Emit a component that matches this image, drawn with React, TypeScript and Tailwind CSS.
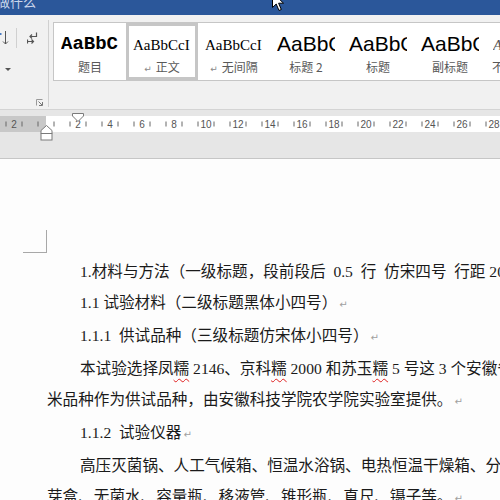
import React from 'react';

interface StyleItem {
  sample: string;
  sampleClass: string;
  label: string;
  mark?: boolean;
  selected?: boolean;
}

const styles: StyleItem[] = [
  { sample: 'AaBbC', sampleClass: "font-['Liberation_Mono'] font-bold text-[19px] text-black", label: '题目' },
  { sample: 'AaBbCcI', sampleClass: "font-['Liberation_Serif'] text-[15px] text-black", label: '正文', mark: true, selected: true },
  { sample: 'AaBbCcI', sampleClass: "font-['Liberation_Serif'] text-[15px] text-black", label: '无间隔', mark: true },
  { sample: 'AaBbCcDd', sampleClass: "font-['Liberation_Sans'] text-[21px] text-black", label: '标题 2' },
  { sample: 'AaBbCcDd', sampleClass: "font-['Liberation_Sans'] text-[21px] text-black", label: '标题' },
  { sample: 'AaBbCcDd', sampleClass: "font-['Liberation_Sans'] text-[21px] text-black", label: '副标题' },
  { sample: 'AaBbCcDd', sampleClass: "font-['Liberation_Serif'] italic text-[15px] text-[#555]", label: '不明显强调' },
];

const rulerNums = [-2, 0, 2, 4, 6, 8, 10, 12, 14, 16, 18, 20, 22, 24, 26, 28];

function Mark() {
  return <span className="font-['DejaVu_Sans'] text-[10px] text-[#a0a0a0] ml-[2px]">↵</span>;
}

function Nuo() {
  return <span className="underline decoration-wavy decoration-[#e02020] decoration-1 underline-offset-[4px]">糯</span>;
}

function Ruler() {
  return (
    <div className="relative h-[49px] bg-[#e6e6e6] border-b border-[#c6c6c6] pt-[6px]">
      <div className="flex h-[16px]">
        <div className="w-[46px] bg-[#c8c8c8]" />
        <div className="flex-1 bg-white" />
      </div>
      <svg className="absolute left-0 top-0" width="500" height="48" viewBox="0 0 500 48">
        {rulerNums.map((n) => {
          const x = 46 + n * 16;
          return (
            <g key={n}>
              <line x1={x - 8} y1={11.5} x2={x - 8} y2={16.5} stroke="#666" strokeWidth="1" />
              <line x1={x + 8} y1={11.5} x2={x + 8} y2={16.5} stroke="#666" strokeWidth="1" />
              {n !== 0 && (
                <text x={x} y={18} textAnchor="middle" fontSize="10" fontFamily="Liberation Sans" fill="#555">
                  {Math.abs(n)}
                </text>
              )}
            </g>
          );
        })}
        <path d="M72.5 3.5 H83.5 V6 L78 11.5 L72.5 6 Z" fill="#fff" stroke="#7a7a7a" strokeWidth="1" />
        <path d="M46.5 15.5 L52 20.5 V23.5 H41 V20.5 Z" fill="#fff" stroke="#7a7a7a" strokeWidth="1" />
        <rect x="41" y="23.5" width="11" height="6.5" fill="#fff" stroke="#7a7a7a" strokeWidth="1" />
      </svg>
    </div>
  );
}

export default function App() {
  return (
    <div className="relative w-[500px] h-[500px] overflow-hidden bg-[#fdfdfd]">
      {/* title bar */}
      <div className="h-[15px] bg-[#2b579a] overflow-hidden">
        <div className="-mt-[8px] -ml-[3px] text-[13px] leading-[20px] text-[#c9d5ea] font-['Noto_Sans_CJK_SC',sans-serif]">
          做什么
        </div>
      </div>

      {/* ribbon */}
      <div className="h-[95px] bg-[#f1f1f1] border-b border-[#d4d4d4] flex overflow-hidden">
        <div className="w-[48px] shrink-0 flex flex-col pt-[13px] pb-[3px]">
          <div className="flex items-center h-[20px]">
            <svg width="10" height="16" viewBox="0 0 10 16">
              <rect x="0" y="3" width="1.5" height="2" fill="#4a7cc4" />
              <path d="M5.5 1 V14 M3 11.5 L5.5 14 L8 11.5" stroke="#555" strokeWidth="1" fill="none" />
            </svg>
            <div className="ml-[6px] w-px h-[20px] bg-[#d0d0d0]" />
            <svg className="ml-[10px]" width="11" height="13" viewBox="0 0 11 13">
              <path d="M9.5 0.5 V4.5 H3 M5 2.5 L3 4.5 L5 6.5" stroke="#555" strokeWidth="1.2" fill="none" />
              <path d="M0.5 9.5 H6 M4.5 7.5 L6.5 9.5 L4.5 11.5 M0.5 7.5 V11.5" stroke="#555" strokeWidth="1.2" fill="none" />
            </svg>
          </div>
          <svg className="ml-[5px] mt-[20px]" width="6" height="4" viewBox="0 0 6 4">
            <path d="M0 0 H6 L3 3 Z" fill="#555" />
          </svg>
          <svg className="mt-auto ml-[36px]" width="7" height="7" viewBox="0 0 7 7">
            <path d="M0.5 6.5 V0.5 H6.5" stroke="#999" strokeWidth="1" fill="none" />
            <path d="M2.5 2.5 L6 6 M6.5 3 V6.5 H3" stroke="#777" strokeWidth="1" fill="none" />
          </svg>
        </div>
        <div className="w-px shrink-0 h-[87px] mt-[5px] bg-[#d0d0d0]" />
        <div className="ml-[4px] mt-[7px] w-[560px] shrink-0 h-[59px] border border-[#c6c6c6] bg-white flex">
          {styles.map((s, i) => (
            <div
              key={i}
              className={`w-[72px] h-[57px] shrink-0 border-[3px] ${s.selected ? 'border-[#c6c6c6]' : 'border-transparent'}`}
            >
              <div className="h-[33px] pt-[3px] flex items-center">
                <div className="mx-[4px] w-[58px] overflow-hidden whitespace-nowrap">
                  <span className={s.sampleClass}>{s.sample}</span>
                </div>
              </div>
              <div className="h-[16px] leading-[16px] text-center whitespace-nowrap text-[12px] text-[#595959] font-['Noto_Sans_CJK_SC',sans-serif]">
                {s.mark && <span className="font-['DejaVu_Sans'] text-[9px] text-[#888] mr-[4px]">↵</span>}
                {s.label}
              </div>
            </div>
          ))}
        </div>
      </div>

      <Ruler />

      {/* document */}
      <div className="pt-[71px]">
        <div className="ml-[23px] w-[24px] h-[23px] border-r border-b border-[#a8a8a8]" />
        <div className="mt-[3px] pl-[47px] text-[15.6px] leading-[31px] text-[#1a1a1a] whitespace-pre font-['Liberation_Serif','Noto_Sans_CJK_SC',serif]">
          <div className="pl-[33px]">1.材料与方法（一级标题，段前段后{'\u2002'}0.5{'\u2002'}行  仿宋四号  行距 20 磅）</div>
          <div className="pl-[33px]">1.1 试验材料（二级标题黑体小四号）<Mark /></div>
          <div className="pl-[33px]">1.1.1  供试品种（三级标题仿宋体小四号）<Mark /></div>
          <div className="pl-[33px]">本试验选择凤<Nuo /> 2146、京科<Nuo /> 2000 和苏玉<Nuo /> 5 号这 3 个安徽省糯玉</div>
          <div>米品种作为供试品种，由安徽科技学院农学院实验室提供。<Mark /></div>
          <div className="pl-[33px]">1.1.2  试验仪器<Mark /></div>
          <div className="pl-[33px]">高压灭菌锅、人工气候箱、恒温水浴锅、电热恒温干燥箱、分析天平、</div>
          <div>芽盒、无菌水、容量瓶、移液管、锥形瓶、直尺、镊子等。<Mark /></div>
        </div>
      </div>

      {/* mouse pointer */}
      <svg className="absolute left-[272px] top-[-8px]" width="13" height="20" viewBox="0 0 13 20">
        <path d="M0.5 0.5 V15.5 L4.2 12 L7 18.5 L9.3 17.5 L6.6 11.2 H11.5 Z" fill="#fff" stroke="#000" strokeWidth="1" />
      </svg>
    </div>
  );
}
